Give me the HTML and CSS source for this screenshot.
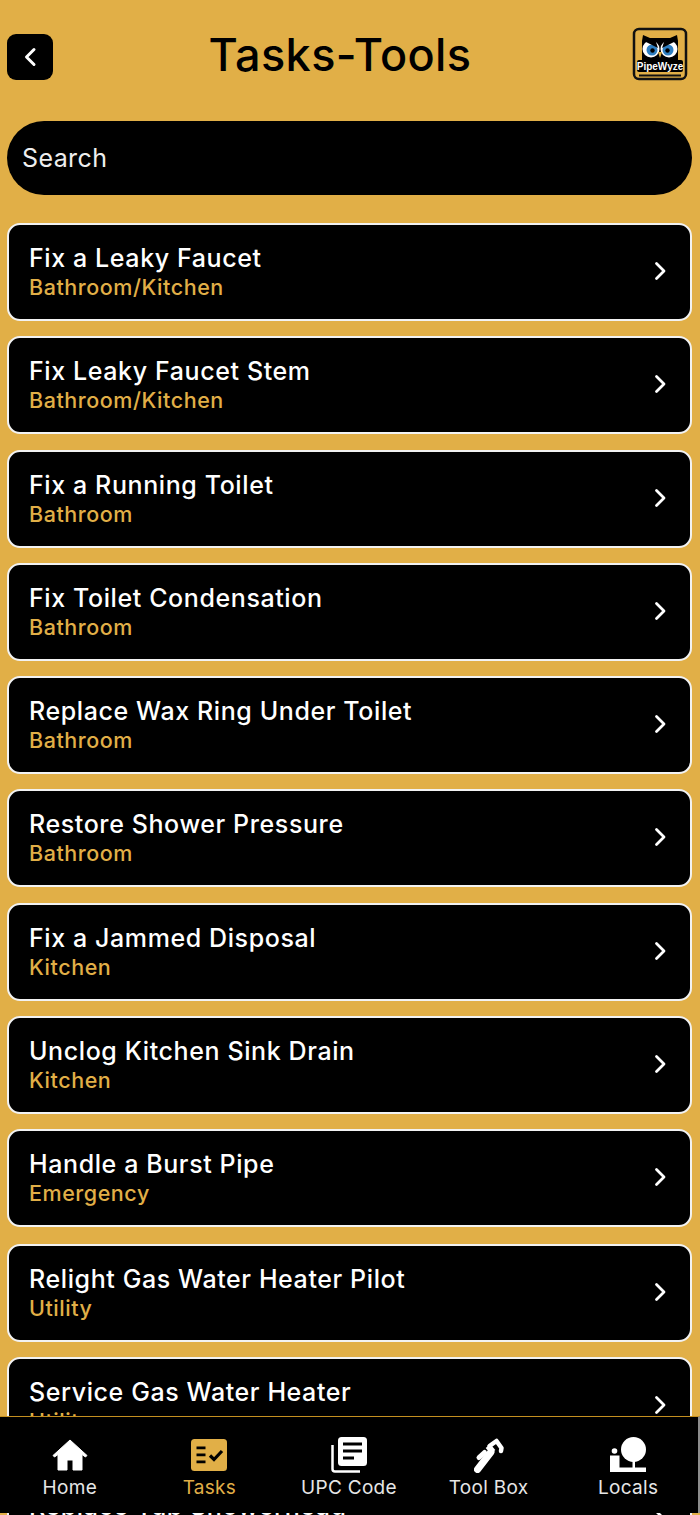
FILE: index.html
```html
<!DOCTYPE html>
<html lang="en">
<head>
  <meta charset="UTF-8">
  <meta name="viewport" content="width=device-width, initial-scale=1.0">
  <title>Tasks-Tools</title>
  <link rel="stylesheet" href="styles.css">
</head>
<body>
  <div class="screen">
    <header class="top-bar">
      <button class="back-btn" type="button" aria-label="Back">
        <svg width="14" height="22" viewBox="0 0 14 22"><path d="M11 3.500 3.500 11l7.500 7.500" fill="none" stroke="#fff" stroke-width="3" stroke-linecap="round" stroke-linejoin="round"/></svg>
      </button>
      <h1>Tasks-Tools</h1>
      <div class="logo">
        <svg width="56" height="54" viewBox="0 0 56 54">
          <rect x="2" y="2" width="52" height="50" rx="5" fill="none" stroke="#111" stroke-width="2.500"/>
          <path d="M7 48.500h42" stroke="#111" stroke-width="2"/>
          <path d="M10 42V14l1-6 7 3h20l7-3 1 6v28z" fill="#000"/>
          <rect x="5" y="33" width="46" height="12" rx="2" fill="#000"/>
          <circle cx="19" cy="22" r="8.500" fill="#fff"/>
          <circle cx="37" cy="22" r="8.500" fill="#fff"/>
          <circle cx="20" cy="23" r="5.500" fill="#2f7fc1"/>
          <circle cx="36" cy="23" r="5.500" fill="#2f7fc1"/>
          <circle cx="20.500" cy="23.500" r="2.200" fill="#000"/>
          <circle cx="35.500" cy="23.500" r="2.200" fill="#000"/>
          <path d="M10 13l16 8-3-9zM46 13l-16 8 3-9z" fill="#000"/>
          <path d="M26 25h4l-2 6z" fill="#e1af47"/>
          <text x="28" y="42.500" class="logo-text" text-anchor="middle">PipeWyze</text>
        </svg>
      </div>
    </header>

    <div class="search">Search</div>

    <ul class="task-list">
      <li class="task"><div><p class="task-name">Fix a Leaky Faucet</p><p class="task-room">Bathroom/Kitchen</p></div><svg class="chev" width="16" height="22" viewBox="0 0 16 22"><path d="M3.500 3.500 11 11l-7.500 7.500" fill="none" stroke="#fff" stroke-width="2.800" stroke-linecap="round" stroke-linejoin="round"/></svg></li>
      <li class="task"><div><p class="task-name">Fix Leaky Faucet Stem</p><p class="task-room">Bathroom/Kitchen</p></div><svg class="chev" width="16" height="22" viewBox="0 0 16 22"><path d="M3.500 3.500 11 11l-7.500 7.500" fill="none" stroke="#fff" stroke-width="2.800" stroke-linecap="round" stroke-linejoin="round"/></svg></li>
      <li class="task"><div><p class="task-name">Fix a Running Toilet</p><p class="task-room">Bathroom</p></div><svg class="chev" width="16" height="22" viewBox="0 0 16 22"><path d="M3.500 3.500 11 11l-7.500 7.500" fill="none" stroke="#fff" stroke-width="2.800" stroke-linecap="round" stroke-linejoin="round"/></svg></li>
      <li class="task"><div><p class="task-name">Fix Toilet Condensation</p><p class="task-room">Bathroom</p></div><svg class="chev" width="16" height="22" viewBox="0 0 16 22"><path d="M3.500 3.500 11 11l-7.500 7.500" fill="none" stroke="#fff" stroke-width="2.800" stroke-linecap="round" stroke-linejoin="round"/></svg></li>
      <li class="task"><div><p class="task-name">Replace Wax Ring Under Toilet</p><p class="task-room">Bathroom</p></div><svg class="chev" width="16" height="22" viewBox="0 0 16 22"><path d="M3.500 3.500 11 11l-7.500 7.500" fill="none" stroke="#fff" stroke-width="2.800" stroke-linecap="round" stroke-linejoin="round"/></svg></li>
      <li class="task"><div><p class="task-name">Restore Shower Pressure</p><p class="task-room">Bathroom</p></div><svg class="chev" width="16" height="22" viewBox="0 0 16 22"><path d="M3.500 3.500 11 11l-7.500 7.500" fill="none" stroke="#fff" stroke-width="2.800" stroke-linecap="round" stroke-linejoin="round"/></svg></li>
      <li class="task"><div><p class="task-name">Fix a Jammed Disposal</p><p class="task-room">Kitchen</p></div><svg class="chev" width="16" height="22" viewBox="0 0 16 22"><path d="M3.500 3.500 11 11l-7.500 7.500" fill="none" stroke="#fff" stroke-width="2.800" stroke-linecap="round" stroke-linejoin="round"/></svg></li>
      <li class="task"><div><p class="task-name">Unclog Kitchen Sink Drain</p><p class="task-room">Kitchen</p></div><svg class="chev" width="16" height="22" viewBox="0 0 16 22"><path d="M3.500 3.500 11 11l-7.500 7.500" fill="none" stroke="#fff" stroke-width="2.800" stroke-linecap="round" stroke-linejoin="round"/></svg></li>
      <li class="task"><div><p class="task-name">Handle a Burst Pipe</p><p class="task-room">Emergency</p></div><svg class="chev" width="16" height="22" viewBox="0 0 16 22"><path d="M3.500 3.500 11 11l-7.500 7.500" fill="none" stroke="#fff" stroke-width="2.800" stroke-linecap="round" stroke-linejoin="round"/></svg></li>
      <li class="task task-utility"><div><p class="task-name">Relight Gas Water Heater Pilot</p><p class="task-room">Utility</p></div><svg class="chev" width="16" height="22" viewBox="0 0 16 22"><path d="M3.500 3.500 11 11l-7.500 7.500" fill="none" stroke="#fff" stroke-width="2.800" stroke-linecap="round" stroke-linejoin="round"/></svg></li>
      <li class="task"><div><p class="task-name">Service Gas Water Heater</p><p class="task-room">Utility</p></div><svg class="chev" width="16" height="22" viewBox="0 0 16 22"><path d="M3.500 3.500 11 11l-7.500 7.500" fill="none" stroke="#fff" stroke-width="2.800" stroke-linecap="round" stroke-linejoin="round"/></svg></li>
      <li class="task"><div><p class="task-name">Replace Tub Showerhead</p><p class="task-room">Bathroom</p></div><svg class="chev" width="16" height="22" viewBox="0 0 16 22"><path d="M3.500 3.500 11 11l-7.500 7.500" fill="none" stroke="#fff" stroke-width="2.800" stroke-linecap="round" stroke-linejoin="round"/></svg></li>
    </ul>

    <nav class="tab-bar">
      <a class="tab">
        <span class="tab-icon"><svg width="36" height="32" viewBox="0 0 36 32"><path d="M18 1 1 16.500 2.500 18 6 15.500V31h9V21h6v10h9V15.500l3.500 2.500 1.500-1.500z" fill="#fff" stroke="#fff" stroke-linejoin="round"/></svg></span>
        <span class="tab-label">Home</span>
      </a>
      <a class="tab active">
        <span class="tab-icon"><svg width="36" height="32" viewBox="0 0 36 32"><rect width="36" height="32" rx="3.500" fill="#e1af47"/><path d="M5.500 7.500h9v2.800h-9zM5.500 14.500h9v2.800h-9zM5.500 21.500h9v2.800h-9z" fill="#000"/><path d="M19 16.500l4 4 8-8.500" fill="none" stroke="#000" stroke-width="3.200"/></svg></span>
        <span class="tab-label">Tasks</span>
      </a>
      <a class="tab">
        <span class="tab-icon"><svg width="36" height="36" viewBox="0 0 36 36"><path d="M1.500 8v24a2.500 2.500 0 0 0 2.500 2.500h25" fill="none" stroke="#fff" stroke-width="2.500"/><rect x="7" y="0" width="29" height="29" rx="3.500" fill="#fff"/><path d="M12 7h19M12 14h19M12 21h11" stroke="#000" stroke-width="3"/></svg></span>
        <span class="tab-label">UPC Code</span>
      </a>
      <a class="tab">
        <span class="tab-icon"><svg width="30" height="36" viewBox="0 0 30 36"><path d="M3.500 32.500 17 15" stroke="#fff" stroke-width="7" stroke-linecap="round"/><path d="M5 20.500l5.500-5" stroke="#fff" stroke-width="5" stroke-linecap="round"/><path d="M15.500 9l7-5 5 7-.5 3" fill="none" stroke="#fff" stroke-width="4.500" stroke-linecap="round" stroke-linejoin="round"/><path d="M14 9l5 6" stroke="#fff" stroke-width="6"/></svg></span>
        <span class="tab-label">Tool Box</span>
      </a>
      <a class="tab">
        <span class="tab-icon"><svg width="36" height="36" viewBox="0 0 36 36"><circle cx="23.500" cy="12.500" r="12.500" fill="#fff"/><path d="M22.500 23h2.500v8h-2.500z" fill="#fff"/><path d="M9 30.500h27V35H9z" fill="#fff"/><circle cx="4.500" cy="14" r="2.800" fill="#fff"/><path d="M0 18.500h9.500V35H0z" fill="#fff"/></svg></span>
        <span class="tab-label">Locals</span>
      </a>
    </nav>
  </div>
</body>
</html>
```

FILE: styles.css
```css
* {
  box-sizing: border-box;
}

html, body {
  height: 100%;
}

body {
  margin: 0;
  background-color: #000;
  font-family: Inter, "Liberation Sans", sans-serif;
  overflow: hidden;
}

.screen {
  position: relative;
  height: 1515px;
  background-color: #e1af47;
  overflow: hidden;
}

.top-bar {
  display: flex;
  align-items: center;
  justify-content: space-between;
  height: 54px;
  margin-top: 27px;
  padding: 0 12px 0 7px;
}

.back-btn {
  display: flex;
  align-items: center;
  justify-content: center;
  width: 46px;
  height: 46px;
  margin-top: 6px;
  padding: 0;
  border: none;
  border-radius: 9px;
  background-color: #000;
}

h1 {
  margin: 0 0 0 -5px;
  color: #000;
  font-size: 45px;
  font-weight: 500;
  letter-spacing: 0.4px;
}

.logo {
  display: flex;
}

.logo-text {
  fill: #fff;
  font-family: "Liberation Sans", sans-serif;
  font-size: 10px;
  font-weight: 700;
}

.search {
  display: flex;
  align-items: center;
  height: 74px;
  margin: 40px 8px 0 7px;
  padding-left: 15px;
  border-radius: 37px;
  background-color: #000;
  color: #eee;
  font-size: 25px;
  letter-spacing: 0.4px;
}

.task-list {
  display: flex;
  flex-direction: column;
  gap: 15.25px;
  margin: 28px 8px 0 7px;
  padding: 0;
  list-style: none;
}

.task {
  display: flex;
  flex-shrink: 0;
  align-items: center;
  justify-content: space-between;
  height: 98px;
  padding: 0 21px 0 20px;
  border: 2px solid #f2f2f2;
  border-radius: 13px;
  background-color: #000;
}

.task-utility {
  margin-top: 1.75px;
}

.task p {
  margin: 0;
}

.task-name {
  color: #fff;
  font-size: 25px;
  font-weight: 500;
  letter-spacing: 0.6px;
  line-height: 30px;
}

.task-room {
  color: #e1af47;
  font-size: 21.500px;
  font-weight: 500;
  letter-spacing: 0.55px;
  line-height: 28px;
}

.chev {
  flex-shrink: 0;
  margin-bottom: 2px;
}

.tab-bar {
  position: absolute;
  left: 0;
  top: 1416px;
  display: flex;
  width: 700px;
  height: 97px;
  padding-top: 20px;
  border-top: 1px solid #c48f20;
  border-right: 2px solid #8c8c8c;
  background-color: #000;
}

.tab {
  display: flex;
  flex: 1;
  flex-direction: column;
  align-items: center;
  color: #e6e6e6;
  font-size: 19px;
  letter-spacing: 0.3px;
}

.tab-icon {
  display: flex;
  align-items: center;
  height: 36px;
}

.tab-label {
  margin-top: 4px;
  line-height: 21px;
}

.tab.active {
  color: #e1af47;
}
```
